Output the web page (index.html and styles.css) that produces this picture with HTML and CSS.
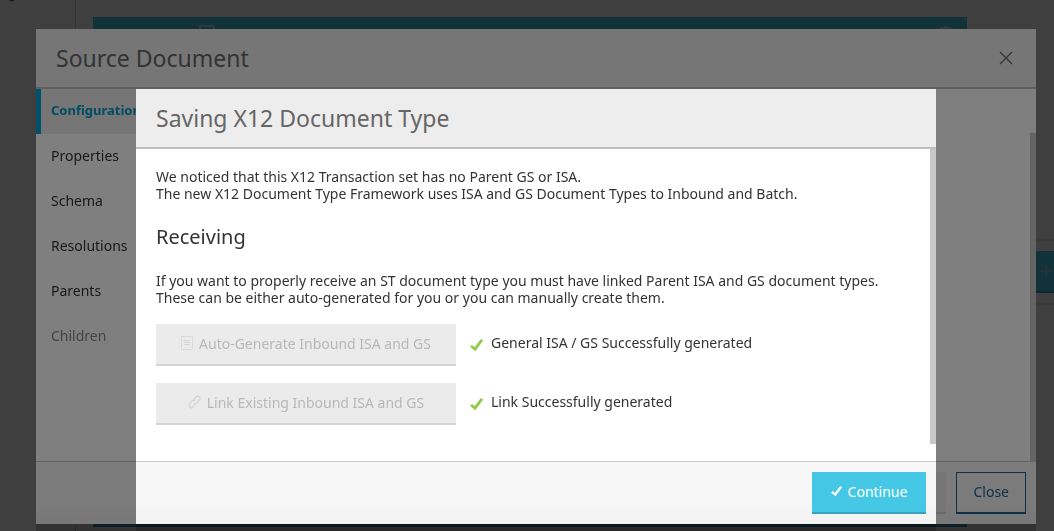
FILE: index.html
```html
<!DOCTYPE html>
<html lang="en">
<head>
<meta charset="utf-8">
<meta name="viewport" content="width=device-width, initial-scale=1">
<title>Saving X12 Document Type</title>
<link rel="stylesheet" href="styles.css">
</head>
<body>
<div class="workspace" aria-hidden="true">
  <aside class="sidebar"><svg width="8" height="2" viewBox="0 0 8 2"><path d="M1.500 0Q4 2 6 0" stroke="#222" fill="none"/></svg></aside>
  <div class="stage">
    <div class="panel">
      <svg width="16" height="20" viewBox="0 0 16 20"><path d="M1 1h14v18H1z" fill="none" stroke="#b8e4ee" stroke-width="2"/></svg>
      <svg width="16" height="16" viewBox="0 0 16 16"><circle cx="8" cy="8" r="5.500" fill="none" stroke="#b8e4ee" stroke-width="2"/><path d="M8 1v3M8 13v3M0 8h3M13 8h3M2.300 2.300l2 2M11.700 11.700l2 2M2.300 13.700l2-2M11.700 4.300l2-2" stroke="#b8e4ee" stroke-width="3"/></svg>
    </div>
  </div>
  <div class="rail">
    <div class="rail-slot"><svg width="12" height="12" viewBox="0 0 12 12"><path d="M6 0v12M0 6h12" stroke="#8cc8d4" stroke-width="2"/></svg></div>
  </div>
</div>

<div class="overlay overlay-source">
  <section class="modal" aria-labelledby="source-title">
    <header class="modal-header">
      <h1 id="source-title" class="modal-title">Source Document</h1>
      <button class="close-icon" type="button" aria-label="Close dialog"><svg width="14" height="14" viewBox="0 0 14 14"><path d="M1 1l12 12M13 1L1 13" fill="none" stroke="#666" stroke-width="1.200"/></svg></button>
    </header>
    <div class="modal-body">
      <nav class="tabs">
        <a class="tab tab-active" href="#configuration">Configuration</a>
        <a class="tab" href="#properties">Properties</a>
        <a class="tab" href="#schema">Schema</a>
        <a class="tab" href="#resolutions">Resolutions</a>
        <a class="tab" href="#parents">Parents</a>
        <a class="tab tab-disabled" href="#children">Children</a>
      </nav>
      <div class="thumb thumb-low"></div>
    </div>
    <footer class="modal-footer">
      <button class="btn btn-disabled btn-blank" type="button" disabled aria-label="Save"></button>
      <button class="btn btn-outline" type="button">Close</button>
    </footer>
  </section>
</div>

<div class="overlay overlay-saving">
  <section class="modal" role="dialog" aria-modal="true" aria-labelledby="saving-title">
    <header class="modal-header">
      <h2 id="saving-title" class="modal-title">Saving X12 Document Type</h2>
    </header>
    <div class="modal-body">
      <div class="content">
        <p class="text">We noticed that this X12 Transaction set has no Parent GS or ISA.<br>The new X12 Document Type Framework uses ISA and GS Document Types to Inbound and Batch.</p>
        <h3 class="heading">Receiving</h3>
        <p class="text">If you want to properly receive an ST document type you must have linked Parent ISA and GS document types.<br>These can be either auto-generated for you or you can manually create them.</p>
        <div class="actions">
          <div class="action">
            <button class="btn btn-disabled btn-wide" type="button" disabled>
              <svg width="12" height="14" viewBox="0 0 12 14"><path d="M.5.5h11v13H.5z" fill="none" stroke="#dadada"/><path d="M3 4.500h6M3 6.500h6M3 8.500h6" stroke="#d6d6d6"/></svg>
              Auto-Generate Inbound ISA and GS</button>
            <svg width="13" height="12" viewBox="0 0 13 12"><path d="M1 7l4 3.200L12 .8" fill="none" stroke="#8fcb4b" stroke-width="2.800"/></svg>
            <span class="status">General ISA / GS Successfully generated</span>
          </div>
          <div class="action">
            <button class="btn btn-disabled btn-wide" type="button" disabled>
              <svg width="13" height="14" viewBox="0 0 13 14"><g fill="none" stroke="#d4d4d4" stroke-width="1.200"><path d="M5 5.500L8 2Q9.500.5 11 1.500t.8 3.300L9 8Q7.500 9.300 6 8.300"/><path d="M7.500 8.500L5 12Q3.500 13.500 2 12.500T1.200 9.200L4 6Q5.500 4.700 7 5.700"/></g></svg>
              Link Existing Inbound ISA and GS</button>
            <svg width="13" height="12" viewBox="0 0 13 12"><path d="M1 7l4 3.200L12 .8" fill="none" stroke="#8fcb4b" stroke-width="2.800"/></svg>
            <span class="status">Link Successfully generated</span>
          </div>
        </div>
      </div>
      <div class="thumb thumb-high"></div>
    </div>
    <footer class="modal-footer">
      <button class="btn btn-primary" type="button"><svg width="11" height="10" viewBox="0 0 13 12"><path d="M1 7l4 3.200L12 .8" fill="none" stroke="#fff" stroke-width="2.800"/></svg>Continue</button>
    </footer>
  </section>
</div>
</body>
</html>
```
FILE: styles.css
```css
* { box-sizing: border-box; }
body {
  margin: 0;
  min-height: 100vh;
  overflow: hidden;
  font-family: "Noto Sans", sans-serif;
  font-size: 14px;
  line-height: 17px;
  color: #333;
  background: #fff;
}
h1, h2, h3, p { margin: 0; }
svg { display: block; flex: none; }

.workspace { display: flex; height: 100vh; background: #fdfdfd; }
.sidebar { width: 76px; padding-left: 8px; border-right: 1px solid #d0d0d0; }
.stage { flex: 1; padding: 17px 0 4px 17px; }
.panel {
  display: flex;
  justify-content: space-between;
  height: 100%;
  padding: 8px 13px 0 106px;
  background: #44c8e6;
  border-bottom: 3px solid #38a3bb;
}
.rail { display: flex; align-items: center; width: 87px; padding-top: 13px; }
.rail-slot {
  display: flex;
  align-items: center;
  justify-content: flex-end;
  width: 100%;
  height: 42px;
  padding-right: 2px;
  background: #44c8e6;
  border-bottom: 2px solid #2c9ab0;
  outline: 2px solid #e8e8e8;
  outline-offset: 10px;
}

.overlay { position: fixed; inset: 0; display: flex; background: rgba(0, 0, 0, .5); }
.overlay-source { padding: 29px 18px 7px 36px; }
.overlay-saving { padding: 89px 118px 7px 136px; }
.modal {
  flex: 1;
  display: flex;
  flex-direction: column;
  min-width: 0;
  background: #fff;
  box-shadow: 0 7px 0 rgba(0, 0, 0, .2);
}
.modal-header {
  display: flex;
  align-items: center;
  justify-content: space-between;
  height: 60px;
  padding: 0 20px;
  background: #ededed;
  border-bottom: 2px solid #bebebe;
}
.modal-title { font-size: 23px; line-height: 32px; font-weight: 400; color: #666; }
.modal-body { position: relative; flex: 1; min-height: 0; }
.modal-footer {
  display: flex;
  justify-content: flex-end;
  gap: 10px;
  height: 63px;
  padding: 10px;
  background: linear-gradient(#f7f7f7 60%, #f2f2f2);
  border-top: 1px solid #c8c8c8;
}
.close-icon { padding: 3px; border: 0; background: none; }

.tabs { display: flex; flex-direction: column; width: 150px; }
.tab {
  height: 45px;
  padding: 13px 0 15px 15px;
  color: #333;
  text-decoration: none;
}
.tab-active {
  padding-left: 10px;
  border-left: 5px solid #00a3d3;
  background: #ededed;
  color: #0098c5;
  font-size: 13px;
  font-weight: 700;
}
.tab-disabled { color: #888; }

.thumb { position: absolute; right: 0; width: 6px; background: #c8c8c8; }
.thumb-low { top: 44px; bottom: 0; }
.thumb-high { top: 0; bottom: 17px; }

.content { padding: 19px 20px; }
.heading { margin: 21px 0; font-size: 20px; line-height: 28px; font-weight: 400; }
.actions { display: flex; flex-direction: column; gap: 17px; margin-top: 18px; }
.action { display: flex; align-items: center; gap: 8px; }
.action > svg { margin-left: 6px; }
.status { padding-bottom: 5px; }

.btn {
  display: flex;
  align-items: center;
  justify-content: center;
  gap: 6px;
  height: 42px;
  padding: 0 16px 2px;
  border: 0;
  border-bottom: 2px solid transparent;
  font: inherit;
}
.btn-disabled { background: #ebebeb; border-color: #d4d4d4; color: #b8b8b8; }
.btn-wide { width: 300px; }
.btn-blank { width: 110px; }
.btn-outline { border: 1px solid #206090; border-bottom-width: 2px; background: none; color: #206090; }
.btn-primary { width: 114px; background: #44c8e6; border-color: #38a3bb; color: #fff; }
```
